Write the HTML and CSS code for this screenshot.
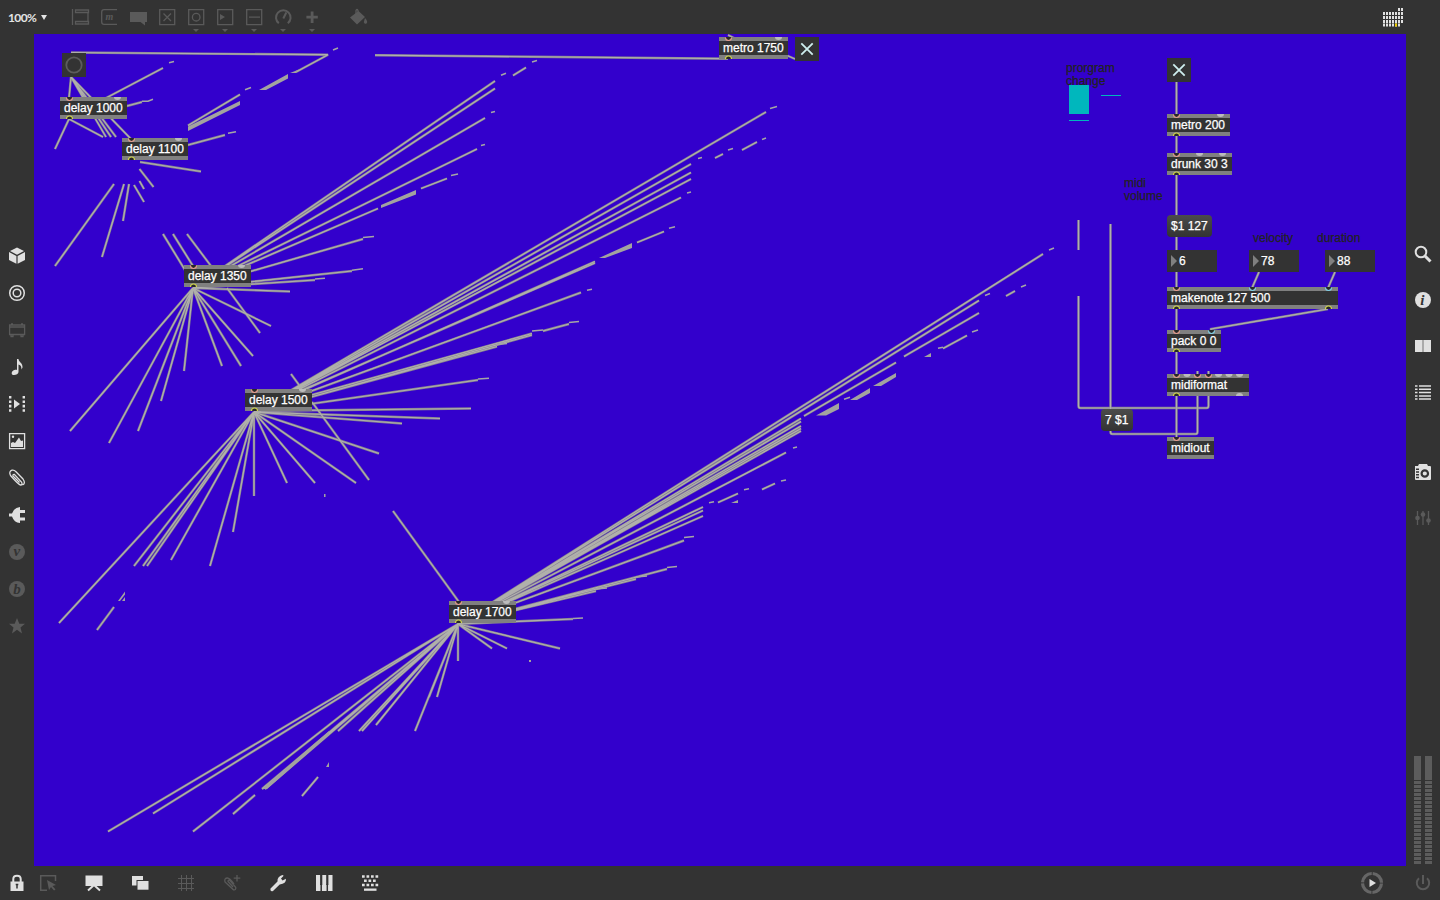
FILE: index.html
```html
<!DOCTYPE html>
<html lang="en">
<head>
<meta charset="utf-8">
<title>Patcher</title>
<link rel="stylesheet" href="styles.css">
</head>
<body>
<div class="app">
<header class="topbar">
  <div class="zoom">100%<span class="caret"></span></div>
  <nav class="tools dim">
    <svg class="ic" viewBox="0 0 24 24"><path class="s" d="M4.500 4v16M7.500 5h13v2.500h-13zM7.500 16.500h13V19h-13zM20 7v10"/></svg>
    <svg class="ic" viewBox="0 0 24 24"><path class="s" d="M20 4.700H7Q4.700 4.700 4.700 7v10q0 2.300 2.300 2.300h13"/><text class="glyph" x="8.500" y="15">m</text></svg>
    <svg class="ic" viewBox="0 0 24 24"><path class="f" d="M4 7h17v10h-2v3.500L14.500 17H4z"/></svg>
    <svg class="ic" viewBox="0 0 24 24"><path class="s" d="M4.700 4.700h15v15h-15zM8.500 8.500l7.500 7.500M16 8.500L8.500 16"/></svg>
    <svg class="ic" viewBox="0 0 24 24"><path class="s" d="M4.700 4.700h15v15h-15z"/><circle class="s" cx="12.200" cy="12.200" r="3.800"/><path class="f" d="M9 24h6l-3 3z"/></svg>
    <svg class="ic" viewBox="0 0 24 24"><path class="s" d="M4.700 4.700h15v15h-15z"/><path class="f" d="M7 9l5 3-5 3zM9 24h6l-3 3z"/></svg>
    <svg class="ic" viewBox="0 0 24 24"><path class="s" d="M4.700 4.700h15v15h-15zM7 12.200h11"/><path class="f" d="M9 24h6l-3 3z"/></svg>
    <svg class="ic" viewBox="0 0 24 24"><path class="s2" d="M7.800 18.300a7.300 7.300 0 1 1 9 0M12.300 13.500l3-6"/><path class="f" d="M9 24h6l-3 3z"/></svg>
    <svg class="ic" viewBox="0 0 24 24"><path class="f" d="M10.700 6.500h2.800v4.300h4.300v2.800h-4.300v4.300h-2.800v-4.300H6.400v-2.800h4.300zM9 24h6l-3 3z"/></svg>
    <svg class="ic bucket" viewBox="0 0 24 24"><path class="s" d="M10 10V5.500q1-2 2 0V8"/><path class="f" d="M12.500 6l6.500 6-8 7.500L4 12.500zM19 13q3.500 4 1.500 5.500-2.500 1-2.700-1.500z"/></svg>
  </nav>
  <svg class="pads" viewBox="0 0 24 24"><path class="pad" d="M18 4.500h5"/><path class="pad" d="M3 8.500h20M3 12.500h20M3 16.500h20M3 20h17"/><path class="hot" d="M15 18.500h2v3h-2z"/></svg>
</header>
<aside class="left">
  <svg class="ic" viewBox="0 0 24 24"><path class="f" d="M12 3.500l7 3.500-7 3.700L5 7zM4 8l7.400 4v7.800L4 16zM20 8l-7.400 4v7.800L20 16z"/></svg>
  <svg class="ic" viewBox="0 0 24 24"><circle class="s15" cx="12" cy="12" r="7.300"/><circle class="s15" cx="12" cy="12" r="3.800"/></svg>
  <svg class="ic dim" viewBox="0 0 24 24"><path class="s" d="M4.600 7h15v9.500h-15zM4.600 9h15M6 17v1.500h2V17M16 17v1.500h2V17M6 6h2M16 6h2"/></svg>
  <svg class="ic" viewBox="0 0 24 24"><path class="f" d="M12 4h1.500c0 3 4.500 4 4 8.500l-1 2c0-4-1.500-4.500-3-5V17c0 3-6.500 4.300-6.800 1.500C6.500 16 10 14.300 12 15z"/></svg>
  <svg class="ic" viewBox="0 0 24 24"><path class="dash" d="M5.200 4v16M18.800 4v16"/><path class="f" d="M9 7.500l6 4.500-6 4.500z"/></svg>
  <svg class="ic" viewBox="0 0 24 24"><path class="s" d="M4.600 4.600h15v15h-15z"/><circle class="f" cx="8" cy="7.700" r="1.200"/><path class="f" d="M6 18v-4l2-1 2 1 4-5.500L16 12l2-.5V18z"/></svg>
  <svg class="ic" viewBox="0 0 24 24"><path class="s" d="M14.500 16.500L8 10q-.5-2 1.500-1.500l7 7.500q1.500 3-1 3-2-.3-10-9.500-2-4 1.500-5.300 2-.5 4 1.500l7 7.300q3 4.500-.5 6"/></svg>
  <svg class="ic" viewBox="0 0 24 24"><path class="f" d="M4 10.500h3Q9 4.500 15 4v3h5v3h-5v4.500h5v3h-5V20q-6-.5-8-6.500H4z"/></svg>
  <svg class="ic dim" viewBox="0 0 24 24"><circle class="f" cx="12" cy="12" r="8"/><text class="cut" x="8.500" y="16.300">v</text></svg>
  <svg class="ic dim" viewBox="0 0 24 24"><circle class="f" cx="12" cy="12" r="8"/><text class="cut" x="8.200" y="17.200">b</text></svg>
  <svg class="ic dim" viewBox="0 0 24 24"><path class="f" d="M12 4l2.300 5.700h5.700l-4.500 3.900L17 19.500l-5-3.700-5 3.700 1.500-5.900L4 9.700h5.700z"/></svg>
</aside>
<main class="canvas">
  <div class="label l-prog">prorgram<br>change</div>
  <div class="label l-vol">midi<br>volume</div>
  <div class="label l-vel">velocity</div>
  <div class="label l-dur">duration</div>
  <svg class="layer" viewBox="34 34 1372 832">
    <defs>
      <g id="in"><path class="hole" d="M-2.800 0h5.600a2.800 3 0 0 1-5.600 0"/><path class="ringr" d="M-3 .5a3 3 0 0 0 6 0"/></g>
      <g id="inb"><path class="hole" d="M-2.800 0h5.600a2.800 3 0 0 1-5.600 0"/><path class="ringb" d="M-3 .5a3 3 0 0 0 6 0"/></g>
      <g id="out"><path class="hole" d="M-2.800 0h5.600a2.800 3 0 0 0-5.600 0"/><path class="ringy" d="M-3 0a3 3 0 0 1 6 0"/></g>
      <path id="idle" class="idle" d="M-3.500 0h7a3.500 3 0 0 1-7 0"/>
      <g id="wires">
        <path d="M71 52.500L328 54.700 296 72M375 55.200L728 58.700M728 35l8 4M786 55l9 4"/>
        <path d="M188 125.500L240 94.500M106 98L163 68M127 106l15-4M188 145l37-10"/>
        <path d="M71 77L69 98M71 77l35 60M71 77l40 60M71 77l45 60M71 77L131 139M69 119l34 18M69 119L55 149"/>
        <path d="M140 162l61 9.500M139.500 169l14 18M139.500 181l4.500 8M134 185l10 17M114 184L55 266M124 184l-22 73M129 184l-6 37"/>
        <path d="M163 234l22 36M173 234l20 32M187 234l24 32M227 288l33 45"/>
        <path d="M193 288L70 431M193 288l-84 155M193 288l-55 143M193 288l-32 113M193 288l-9 83M193 288l29 78M193 288l48 78M193 288l60 68M193 288l78 38M193 288l97 3.500"/>
        <path d="M193 288L495 81M193 288L495 88.500M193 288L485 118M193 288L477 149M193 288L378 208.500M193 288L363 239M193 288L352 271M193 288L315 280"/>
        <path d="M513 75.500l13-8M421 188.500l26-10"/>
        <path d="M254 412L766 112M254 412L691 164M254 412L691 172.500M254 412L691 179M254 412L681 197.500M254 412L595 261.500M254 411L595 263M254 412L581 292.500M254 411L532 333.500M254 413L532 335M254 412.500L497 346.500M254 412L478 380M254 411L471 408.500M254 412L440 418.500M254 412L402 423.500M254 412L379 453.500"/>
        <path d="M742 150l15-8M715 158l8-4M637 242.500l27-11M543 331l26-7"/>
        <path d="M291 374l11 15M312 402l57 78M254 412L356 483M254 412l61 71M254 412l33 71M254 412v84M254 412l-21 120M254 412l-44 154M254 412L171 560M254 412L134 566M254 412L143 566M254 412L147 566M254 412L59 623M97 630l17-23"/>
        <path d="M393 511l66 91"/>
        <path d="M458 624L108 831.500M458 624L153 813.500M458 624L193 831.500M458 624L262 789M458 624L265 789M458 624L338 731M458 624L359 731M458 624L362 731M458 624L376 725M458 624L415 731M458 624l-29 73M458 624l-21 73M458 624v37M458 624l34 24.500M458 624l49 24.500M458 624l102 24.500M458 624L573 619"/>
        <path d="M233 814l22-19M302 796l16-19"/>
        <path d="M458 624L1043 254M458 624L979 300.500M458 624L801 418.500M458 624L801 421.500M458 624L801 426M458 624L801 428.500M458 624L801 431M458 624L786 452.500M458 624L703 507M458 624L703 510.500M458 624L703 516M458 624L684 540.500M458 624L667 569M458 624L636 579M458 624L596 591"/>
        <path d="M979 313l-75 43.500M896 362.500L804 416M1006 296l9-5M943 348.500l24-13M762 489.500l13-6M718 502.500l20-9"/>
        <path d="M1176.500 82v33M1176.500 136v18M1176.500 175v41M1176.500 237v14M1176.500 272v17M1259 272l-7 16M1335 272l-7 16M1176.500 309v22M1328 309l-117 20v3M1176.500 352v23M1197.500 371v4M1208.500 371v4M1176.500 395v43M1078.500 220v30M1078.500 296V406q0 2 2 2h126q2 0 2-2V396M1110.500 224v208q0 2 2 2h83q2 0 2-2V396"/>
      </g>
    </defs>
    <use href="#wires" class="w-edge"/><use href="#wires" class="w-core"/>
    <path class="bits" d="M333 50l5-2M142 101.300h6l5-2M228 133.300l8-1.500M169 62.800l5-1.200M245 89.800l6-2.300M363 237.500l11-1M352 270.300l11-1.500M315 279l10-.8M532 62l5-1.500M501 75.300l5-2M491 112.500l4-1M481 145.500l4-1M451 175.500l7-1.500M770 108.500l7-2M762 139.500l4-1.500M728 150l5-1.500M698 158.500l4-1M687 193l4-1M669 228.300l6-1.500M587 290.300l5-1M532 331l11-1M569 322.500l10-1M497 344.500l10-1M478 379l11-.8M573 618.500l10-.5M1049 250l5-2M985 295.500l5-2M1021 287l5-2M938 348.300l5-1M972 332l6-2M844 399.300l6-2M793 448l4-1M781 481l5-1M744 489.800l5-1M709 502.800l5-1M684 537.500l10-1M667 567.500l10-1M636 577l11-1M596 589l11-1"/>
    <path class="patch" d="M288 74v4.500L266 90h-7zM240 101v4L188 131v-4.500zM290 73l9-3.500-3 3.500zM416 190v4.500L381 208v-3zM632 243v5L605 258h-6zM118 601l7-9.500v3l-5 6.500zM122 601l3-4v4zM326 767l3-5v5zM896 373v4L881 386h-8zM870 388v5L857 400h-7zM839 403v6L826 415.500h-10zM924 357l7-4v4zM731 503l7-3v3zM262 789l67-58v4l-62 54zM324 494h1.500v3H324zM529 660h2v2h-2z"/>
  </svg>
  <div class="teal t-a"></div><div class="teal t-b"></div><div class="teal t-c"></div>

  <div class="button n-bang"><svg viewBox="0 0 24 24"><circle cx="12" cy="12" r="7.700"/></svg></div>
  <div class="button toggle n-tog1"><svg viewBox="0 0 24 24"><path d="M6.300 6.300l11.400 11.400M17.700 6.300L6.300 17.700"/></svg></div>
  <div class="button toggle n-tog2"><svg viewBox="0 0 24 24"><path d="M6.300 6.300l11.400 11.400M17.700 6.300L6.300 17.700"/></svg></div>
  <div class="box n-1000">delay 1000</div>
  <div class="box n-1100">delay 1100</div>
  <div class="box n-1350">delay 1350</div>
  <div class="box n-1500">delay 1500</div>
  <div class="box n-1700">delay 1700</div>
  <div class="box n-1750">metro 1750</div>
  <div class="box n-m200">metro 200</div>
  <div class="box n-drunk">drunk 30 3</div>
  <div class="msg n-127">$1 127</div>
  <div class="num n-six">6</div>
  <div class="num n-78">78</div>
  <div class="num n-88">88</div>
  <div class="box n-make">makenote 127 500</div>
  <div class="box n-pack">pack 0 0</div>
  <div class="box n-fmt">midiformat</div>
  <div class="msg n-7">7 $1</div>
  <div class="box n-out">midiout</div>
  <svg class="layer" viewBox="34 34 1372 832">
    <use href="#in" x="69.500" y="97"/><use href="#idle" x="117.500" y="97"/><use href="#out" x="69.500" y="119"/>
    <use href="#in" x="131.500" y="138"/><use href="#idle" x="178.500" y="138"/><use href="#out" x="131.500" y="160"/>
    <use href="#in" x="193.500" y="265"/><use href="#idle" x="241.500" y="265"/><use href="#out" x="193.500" y="287"/>
    <use href="#in" x="254.500" y="389"/><use href="#idle" x="302.500" y="389"/><use href="#out" x="254.500" y="411"/>
    <use href="#in" x="458.500" y="601"/><use href="#idle" x="506.500" y="601"/><use href="#out" x="458.500" y="623"/>
    <use href="#in" x="728.500" y="37"/><use href="#idle" x="778.500" y="37"/><use href="#out" x="728.500" y="59"/>
    <use href="#in" x="1176.500" y="114"/><use href="#idle" x="1220.500" y="114"/><use href="#out" x="1176.500" y="136"/>
    <use href="#in" x="1176.500" y="153"/><use href="#idle" x="1199.500" y="153"/><use href="#idle" x="1222.500" y="153"/><use href="#out" x="1176.500" y="175"/>
    <use href="#in" x="1176.500" y="287"/><use href="#inb" x="1252.500" y="287"/><use href="#inb" x="1328.500" y="287"/><use href="#out" x="1176.500" y="309"/><use href="#out" x="1328.500" y="309"/>
    <use href="#in" x="1176.500" y="330"/><use href="#inb" x="1211.500" y="330"/><use href="#out" x="1176.500" y="352"/>
    <use href="#in" x="1176.500" y="374"/><use href="#idle" x="1187" y="374"/><use href="#in" x="1197.500" y="374"/><use href="#in" x="1208.500" y="374"/><use href="#idle" x="1218.500" y="374"/><use href="#idle" x="1229" y="374"/><use href="#idle" x="1239.500" y="374"/><use href="#out" x="1176.500" y="396"/>
    <path class="idle" d="M1236 396a3.500 3 0 0 1 7 0z"/>
    <use href="#in" x="1176.500" y="437"/>
  </svg>
</main>
<aside class="right">
  <svg class="ic" viewBox="0 0 24 24"><circle class="s2" cx="10" cy="10" r="5.300"/><path class="s3" d="M14 14l5.500 5.500"/></svg>
  <svg class="ic" viewBox="0 0 24 24"><circle class="f" cx="12" cy="12" r="8"/><text class="cut" x="9.300" y="17.300">i</text></svg>
  <svg class="ic" viewBox="0 0 24 24"><path class="f" d="M4 6h7v12H4zM13 6h7v12h-7z"/><path fill="#aaa" d="M11 6h2v12h-2z"/></svg>
  <svg class="ic" viewBox="0 0 24 24"><path class="s15" d="M4 6h2.500M8 6h12M4 9.300h2.500M8 9.300h12M4 12.600h2.500M8 12.600h12M4 15.900h2.500M8 15.900h12M4 19h2.500M8 19h12"/></svg>
  <svg class="ic cam" viewBox="0 0 24 24"><path class="f" d="M8 4h8l1 2h2q1 0 1 1v12q0 1-1 1H5q-1 0-1-1V6h3z"/><circle class="lens" cx="13.800" cy="13.500" r="3.200"/><path class="knock" d="M5 9.300h3M5 12h3M5 14.700h3M5 17.400h3"/></svg>
  <svg class="ic dim" viewBox="0 0 24 24"><path class="s" d="M6.500 5v14M12 5v14M17.500 5v14"/><circle class="f" cx="6.500" cy="12" r="2.300"/><circle class="f" cx="12" cy="8.500" r="2.300"/><circle class="f" cx="17.500" cy="14.500" r="2.300"/></svg>
  <div class="meters"><i></i><i></i></div>
</aside>
<footer class="bottom">
  <svg class="ic lock" viewBox="0 0 24 24"><path class="s2" d="M8.300 11V8q0-3.300 3.700-3.300T15.700 8v3"/><path class="f" d="M5.500 10.500h13V20h-13z"/><path class="knock" d="M12 13v4.500M10.700 13.500h2.600"/></svg>
  <svg class="ic dim sel" viewBox="0 0 24 24"><path class="s15" d="M11 19.300H4.700V4.700h14.800V10"/><path class="f" d="M11 9l9 5-3.500 1 3 3.500-1.500 1-3-3.500-2 3z"/></svg>
  <svg class="ic" viewBox="0 0 24 24"><path class="f" d="M3.500 4.500h17v10.500h-17z"/><path class="s2" d="M12 14l-6 5.500M12 14l6 5.500"/></svg>
  <svg class="ic" viewBox="0 0 24 24"><path class="f" d="M4 5h11v4H8.500v5.500H4z"/><path class="f" d="M9.500 10h11v8.700h-11z"/></svg>
  <svg class="ic dim" viewBox="0 0 24 24"><path class="s1" d="M7.500 4v16M12.500 4v16M17.500 4v16M4 7.500h16M4 12.500h16M4 17.500h16"/></svg>
  <svg class="ic dim" viewBox="0 0 24 24"><path class="s" d="M13 16l-5-5.500q0-2 1.700-1.200l6 7q.5 3-2.200 2.500L5 11q-1-4 2.500-4 2 0 6.500 6M17 4v6.500M13.700 7.200h6.600"/></svg>
  <svg class="ic" viewBox="0 0 24 24"><path class="f" d="M4.500 17.500l7-7Q11 5.500 16.500 4l1.200.7L15 7.500l1.500 2L20 7.800q.3 5-6.300 5.700L7 20q-3 1-2.500-2.500z"/></svg>
  <svg class="ic" viewBox="0 0 24 24"><path class="f" d="M4 4h16.500v16H4z"/><path class="knock" d="M9.200 20v-7M15.300 20v-7"/><path class="blackkeys" d="M9.200 4v10M15.300 4v10"/></svg>
  <svg class="ic" viewBox="0 0 24 24"><path class="keys" d="M4 5.500h16.500M6 9.800h12.500M4 14h16.500"/><path class="f" d="M6 17.500h12.500v2.300H6z"/></svg>
  <svg class="ic play" viewBox="0 0 24 24"><circle class="ringp" cx="12" cy="12" r="9.500"/><path class="f" d="M9.500 8v8l6.500-4z"/></svg>
  <svg class="ic dim" viewBox="0 0 24 24"><path class="s2" d="M8 7.200a6.200 6.200 0 1 0 8 0M12 4v9"/></svg>
</footer>
</div>
</body>
</html>
```
FILE: styles.css
```css
* { box-sizing: border-box; }
body { margin: 0; background: #333; font-family: "Liberation Sans", Arial, sans-serif; }
.app { width: 1440px; height: 900px; display: grid; grid-template: 34px 832px 34px / 34px 1372px 34px; overflow: hidden; }
.ic { width: 24px; height: 24px; display: block; flex: none; overflow: visible; color: #e0e0e0; }
.dim, .dim .ic { color: #5a5a5a; }
.f { fill: currentColor; }
.s, .s1, .s15, .s2, .s3 { fill: none; stroke: currentColor; stroke-width: 1.3; }
.s1 { stroke-width: 1; }
.s15 { stroke-width: 1.5; }
.s2 { stroke-width: 2; }
.s3 { stroke-width: 3; }
.dash { stroke: currentColor; stroke-width: 2.4; stroke-dasharray: 2.6 1.8; }
.glyph { font: italic bold 10px "Liberation Serif", serif; fill: currentColor; }
.cut { font: italic bold 15px "Liberation Serif", serif; fill: #333; }
.knock { stroke: #333; stroke-width: 1.5; fill: none; }
.blackkeys { stroke: #333; stroke-width: 2.2; }
.lens { fill: none; stroke: #333; stroke-width: 2.2; }
.keys { stroke: currentColor; stroke-width: 2.6; stroke-dasharray: 2.7 1.8; }
.ringp { fill: none; stroke: #666; stroke-width: 3.2; stroke-dasharray: 13.9 1; stroke-dashoffset: -.5; }

.topbar { grid-column: 1 / 4; display: flex; align-items: center; padding-left: 8px; }
.zoom { width: 60px; font: bold 12px Lato, sans-serif; color: #e4e4e4; display: flex; align-items: center; gap: 5px; letter-spacing: -.6px; }
.caret { border: 3.5px solid transparent; border-top: 5px solid #e4e4e4; border-bottom: 0; }
.tools { display: flex; gap: 5px; }
.bucket { margin-left: 17px; }
.pads { width: 24px; height: 24px; margin-left: auto; margin-right: 36px; }
.pad { stroke: #e0e0e0; stroke-width: 3; stroke-dasharray: 2 1; }
.hot { fill: #ebcb00; }

.left { display: flex; flex-direction: column; align-items: center; gap: 13px; padding-top: 210px; }
.right { display: flex; flex-direction: column; align-items: center; gap: 22px; padding-top: 208px; }
.cam { margin-top: 34px; }
.meters { display: flex; gap: 4px; margin-top: auto; margin-bottom: 2px; }
.meters i { width: 7px; height: 108px; background: linear-gradient(#5c5c5c, #5c5c5c) top / 7px 24px no-repeat, repeating-linear-gradient(#333 0 1px, #5c5c5c 1px 4px); }
.bottom { grid-column: 1 / 4; display: flex; align-items: center; gap: 22px; padding: 0 5px; }
.lock { margin-right: -15px; }
.play { margin-left: auto; margin-right: 5px; }

.canvas { position: relative; background: #3300cc; overflow: hidden; }
.layer { position: absolute; left: 0; top: 0; width: 1372px; height: 832px; }
.w-edge { fill: none; stroke: #837d90; stroke-width: 2.400; }
.w-core { fill: none; stroke: #b0b0ab; stroke-width: 1.200; }
.bits { fill: none; stroke: #a5a5a5; stroke-width: 1.500; }
.patch { fill: #a3a39f; }
.hole { fill: #282828; }
.ringr, .ringb, .ringy { fill: none; stroke: #e79a8b; stroke-width: 1.100; }
.ringb { stroke: #7fd0e6; }
.ringy { stroke: #d3d849; }
.idle { fill: #bcbcbc; }

.box, .msg, .num, .button, .label, .teal { position: absolute; font-size: 12px; white-space: nowrap; }
.box, .msg, .num { height: 22px; color: #fff; -webkit-text-stroke: .25px #fff; }
.box { background: #333; border: solid #808080; border-width: 4px 0; padding-left: 4px; line-height: 14px; }
.msg { background: linear-gradient(#4b4b4b, #333); border-radius: 4px; padding-left: 4px; line-height: 22px; }
.num { width: 50px; background: #333; padding-left: 12px; line-height: 22px; }
.num::before { content: ""; position: absolute; left: 4px; top: 5px; border: 6px solid transparent; border-left: 6px solid #808080; border-right: 0; }
.button { width: 24px; height: 24px; background: #333; }
.button svg { display: block; width: 24px; height: 24px; fill: none; stroke: #5c5c5c; stroke-width: 1.800; }
.toggle svg { stroke: #ceeeee; }
.label { color: #222; line-height: 13px; -webkit-text-stroke: .25px #222; }
.teal { background: #00b7bd; width: 20px; height: 1px; }

.n-bang { left: 28px; top: 19px; }
.n-tog1 { left: 761px; top: 3px; }
.n-tog2 { left: 1133px; top: 24px; }
.n-1000 { left: 26px; top: 63px; width: 67px; }
.n-1100 { left: 88px; top: 104px; width: 66px; }
.n-1350 { left: 150px; top: 231px; width: 67px; }
.n-1500 { left: 211px; top: 355px; width: 67px; }
.n-1700 { left: 415px; top: 567px; width: 67px; }
.n-1750 { left: 685px; top: 3px; width: 69px; }
.n-m200 { left: 1133px; top: 80px; width: 63px; }
.n-drunk { left: 1133px; top: 119px; width: 65px; }
.n-127 { left: 1133px; top: 181px; width: 45px; }
.n-six { left: 1133px; top: 216px; }
.n-78 { left: 1215px; top: 216px; }
.n-88 { left: 1291px; top: 216px; }
.n-make { left: 1133px; top: 253px; width: 171px; }
.n-pack { left: 1133px; top: 296px; width: 54px; }
.n-fmt { left: 1133px; top: 340px; width: 82px; }
.n-7 { left: 1067px; top: 375px; width: 32px; }
.n-out { left: 1133px; top: 403px; width: 47px; }
.l-prog { left: 1032px; top: 28px; }
.l-vol { left: 1090px; top: 143px; }
.l-vel { left: 1219px; top: 198px; }
.l-dur { left: 1283px; top: 198px; }
.t-a { left: 1035px; top: 51px; height: 29px; }
.t-b { left: 1035px; top: 86px; }
.t-c { left: 1067px; top: 61px; }
```
